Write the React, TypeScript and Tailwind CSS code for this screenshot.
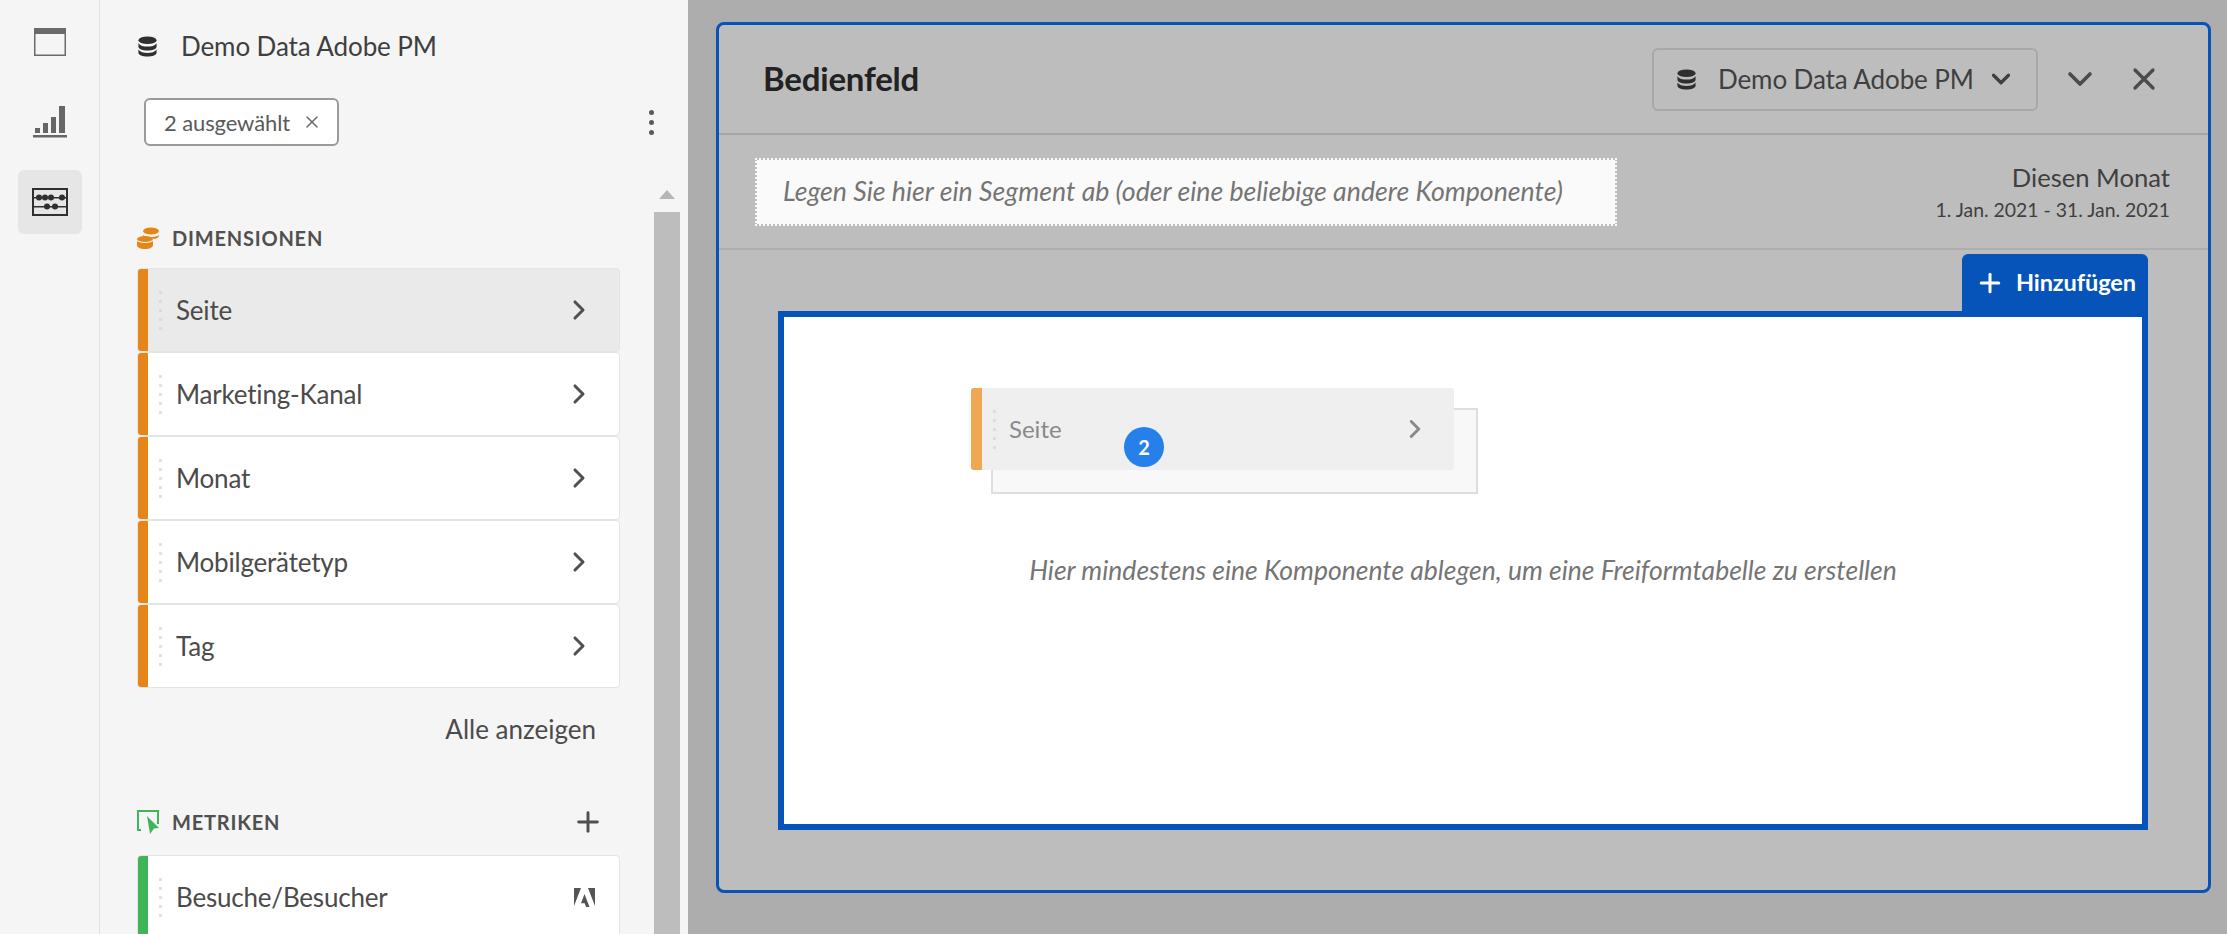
import React from 'react';
import { ChevronDown, ChevronRight, Plus, X } from 'lucide-react';

const font = 'font-["Lato","Open_Sans",sans-serif]';

function DbIcon({ className }: { className?: string }) {
  return (
    <svg viewBox="0 0 22 22" className={className} fill="currentColor">
      <ellipse cx="11" cy="4.5" rx="9.5" ry="4" />
      <path d="M1.5 7.5c1.5 2.6 5.4 3.6 9.5 3.6s8-1 9.500-3.600v3.800c0 2.300-4.300 4-9.500 4s-9.500-1.700-9.500-4z" />
      <path d="M1.500 14.200c1.500 2.600 5.400 3.600 9.500 3.600s8-1 9.500-3.600v3.400c0 2.300-4.300 4-9.500 4s-9.500-1.700-9.500-4z" />
    </svg>
  );
}

function Handle() {
  return (
    <div className="flex w-[3px] shrink-0 flex-col gap-[6px] opacity-70">
      {[0, 1, 2, 3, 4].map((i) => (
        <span key={i} className="h-[3px] w-[3px] bg-[#d6d6d6]" />
      ))}
    </div>
  );
}

function AdobeMark() {
  return (
    <svg viewBox="0 0 21 19" className="h-[19px] w-[21px] text-[#555555]" fill="currentColor">
      <path d="M0 0h7L0 18z" />
      <path d="M21 0h-7l7 18z" />
      <path d="M10.500 6l5 13h-3.400l-1.400-3.700H7z" />
    </svg>
  );
}

function Row({ label, color, active, logo }: { label: string; color: string; active?: boolean; logo?: boolean }) {
  return (
    <div className={`flex h-[84px] shrink-0 overflow-hidden rounded-[4px] border border-[#e4e4e4] ${active ? 'bg-[#eaeaea]' : 'bg-white'}`}>
      <div className={`w-[10px] shrink-0 ${color}`} />
      <div className="flex flex-1 items-center pl-[11px] pr-[24px]">
        <Handle />
        <span className="ml-[14px] flex-1 text-[26px] tracking-[-0.2px] text-[#4b4b4b]">{label}</span>
        {logo ? <AdobeMark /> : <ChevronRight size={32} strokeWidth={2.300} className="text-[#505050]" />}
      </div>
    </div>
  );
}

function Rail() {
  return (
    <div className="flex w-[100px] shrink-0 flex-col items-center border-r border-[#e1e1e1] bg-[#f5f5f5] pt-[28px]">
      <svg viewBox="0 0 32 28" className="h-[28px] w-[32px]">
        <rect x="0.750" y="0.750" width="30.500" height="26.500" fill="none" stroke="#6a6a6a" strokeWidth="1.500" />
        <rect x="0" y="0" width="32" height="6" fill="#6a6a6a" />
      </svg>
      <svg viewBox="0 0 34 32" className="mt-[50px] h-[32px] w-[34px]" fill="#666666">
        <rect x="2" y="22" width="5" height="5" />
        <rect x="10" y="17" width="5" height="10" />
        <rect x="18" y="11" width="5" height="16" />
        <rect x="26" y="0" width="6" height="27" />
        <rect x="0" y="29" width="34" height="2.500" />
      </svg>
      <div className="mt-[32px] flex h-[64px] w-[64px] items-center justify-center rounded-[6px] bg-[#e6e6e6]">
        <svg viewBox="0 0 36 28" className="h-[28px] w-[36px]" fill="#2f2f2f">
          <rect x="1" y="1" width="34" height="26" fill="none" stroke="#2f2f2f" strokeWidth="2" />
          <rect x="1" y="9" width="34" height="1.500" />
          <rect x="1" y="18" width="34" height="1.500" />
          <circle cx="7" cy="9.500" r="3" />
          <circle cx="13" cy="9.500" r="3" />
          <circle cx="19" cy="9.500" r="3" />
          <circle cx="30" cy="9.500" r="3" />
          <circle cx="15" cy="18.500" r="3" />
          <circle cx="23" cy="18.500" r="3" />
        </svg>
      </div>
    </div>
  );
}

function Sidebar() {
  return (
    <div className="flex w-[588px] shrink-0 flex-col bg-[#f5f5f5]">
      <div className="h-[178px] shrink-0 pl-[37px] pt-[32px]">
        <div className="flex h-[28px] items-center">
          <DbIcon className="h-[21px] w-[21px] text-[#2f2f2f]" />
          <span className="ml-[23px] text-[26px] tracking-[-0.1px] text-[#3f3f3f]">Demo Data Adobe PM</span>
        </div>
        <div className="mt-[38px] flex items-center pr-[34px]">
          <div className="ml-[7px] flex h-[48px] w-[195px] items-center rounded-[6px] border-2 border-[#9a9a9a] bg-white pl-[18px]">
            <span className="text-[22px] tracking-[-0.1px] text-[#5a5a5a]">2 ausgewählt</span>
            <X size={20} strokeWidth={1.800} className="ml-[12px] text-[#6a6a6a]" />
          </div>
          <div className="ml-auto flex flex-col gap-[5px]">
            <span className="h-[5px] w-[5px] rounded-full bg-[#5a5a5a]" />
            <span className="h-[5px] w-[5px] rounded-full bg-[#5a5a5a]" />
            <span className="h-[5px] w-[5px] rounded-full bg-[#5a5a5a]" />
          </div>
        </div>
      </div>
      <div className="flex min-h-0 flex-1">
        <div className="flex w-[554px] shrink-0 flex-col overflow-hidden pl-[37px] pr-[34px] pt-[46px]">
          <div className="flex h-[28px] shrink-0 items-center">
            <svg viewBox="0 0 22 22" className="h-[22px] w-[22px]" fill="#e68619">
              <ellipse cx="14" cy="4" rx="8" ry="3.500" />
              <path d="M6 8c2 1.500 5 2 8 2s6-.5 8-2c0 2.500-1.500 3.500-5 4-3-2-8-2.500-11-1.500z" />
              <ellipse cx="8" cy="12" rx="8" ry="3" />
              <path d="M0 14c2 1.500 5 2 8 2s6-.5 8-2v4c0 2.500-3.500 4-8 4s-8-1.500-8-4z" />
            </svg>
            <span className="ml-[13px] text-[20px] font-bold tracking-[0.8px] text-[#505050]">DIMENSIONEN</span>
          </div>
          <div className="mt-[16px] flex shrink-0 flex-col">
            <Row label="Seite" color="bg-[#e68619]" active />
            <Row label="Marketing-Kanal" color="bg-[#e68619]" />
            <Row label="Monat" color="bg-[#e68619]" />
            <Row label="Mobilgerätetyp" color="bg-[#e68619]" />
            <Row label="Tag" color="bg-[#e68619]" />
          </div>
          <div className="mt-[26px] shrink-0 pr-[24px] text-right text-[26px] leading-[30px] text-[#4b4b4b]">Alle anzeigen</div>
          <div className="mt-[64px] flex h-[28px] shrink-0 items-center">
            <svg viewBox="0 0 22 24" className="h-[24px] w-[22px]" fill="none">
              <path d="M4 20H1V1h20v13" stroke="#3fb55a" strokeWidth="2" />
              <path d="M10 6l12 12-5 .5L13 24z" fill="#3fb55a" />
            </svg>
            <span className="ml-[13px] text-[20px] font-bold tracking-[0.8px] text-[#505050]">METRIKEN</span>
            <Plus size={32} strokeWidth={2.200} className="ml-auto mr-[16px] text-[#505050]" />
          </div>
          <div className="mt-[19px] flex shrink-0 flex-col">
            <Row label="Besuche/Besucher" color="bg-[#3fb55a]" logo />
          </div>
        </div>
        <div className="flex w-[26px] shrink-0 flex-col">
          <div className="flex h-[34px] items-center justify-center pb-[2px]">
            <span className="h-0 w-0 border-x-[8px] border-b-[9px] border-x-transparent border-b-[#b5b5b5]" />
          </div>
          <div className="flex-1 bg-[#bdbdbd]" />
        </div>
        <div className="w-[8px] shrink-0 bg-[#f5f5f5]" />
      </div>
    </div>
  );
}

function Workspace() {
  return (
    <div className="min-w-0 flex-1 bg-[#adadad] pb-[41px] pl-[28px] pr-[16px] pt-[22px]">
      <div className="flex h-full flex-col overflow-hidden rounded-[8px] border-[3px] border-[#0654ba] bg-[#bdbdbd]">
        <div className="flex h-[110px] shrink-0 items-center border-b-2 border-[#a6a6a6] pl-[44px]">
          <span className="text-[33px] font-bold tracking-[-0.2px] text-[#222222]">Bedienfeld</span>
          <div className="ml-auto flex h-[63px] w-[386px] items-center rounded-[6px] border-2 border-[#a8a8a8] pl-[22px]">
            <DbIcon className="h-[21px] w-[21px] text-[#2f2f2f]" />
            <span className="ml-[21px] text-[26px] tracking-[-0.1px] text-[#3f3f3f]">Demo Data Adobe PM</span>
            <ChevronDown size={30} strokeWidth={2.600} className="ml-[12px] text-[#3f3f3f]" />
          </div>
          <ChevronDown size={40} strokeWidth={2.200} className="ml-[22px] text-[#4b4b4b]" />
          <X size={36} strokeWidth={2.200} className="ml-[26px] mr-[46px] text-[#4b4b4b]" />
        </div>
        <div className="flex h-[115px] shrink-0 items-center border-b-2 border-[#aeaeae] pl-[36px] pr-[38px]">
          <div className="flex h-[68px] w-[862px] items-center border-2 border-dotted border-[#fafafa] bg-[#fafafa] bg-clip-padding pl-[26px]">
            <span className="whitespace-nowrap text-[26.700px] italic text-[#757575]">Legen Sie hier ein Segment ab (oder eine beliebige andere Komponente)</span>
          </div>
          <div className="ml-auto flex flex-col items-end">
            <span className="text-[25.600px] leading-[30px] text-[#3f3f3f]">Diesen Monat</span>
            <span className="mt-[6px] text-[19.400px] leading-[24px] text-[#3f3f3f]">1. Jan. 2021 - 31. Jan. 2021</span>
          </div>
        </div>
        <div className="flex min-h-0 flex-1 flex-col items-end pl-[59px] pr-[60px] pt-[4px]">
          <div className="flex h-[57px] w-[186px] shrink-0 items-center rounded-t-[6px] bg-[#0654ba] pl-[13px] text-white">
            <Plus size={30} strokeWidth={2.400} />
            <span className="ml-[11px] text-[23.500px] font-bold tracking-[-0.1px]">Hinzufügen</span>
          </div>
          <div className="h-[519px] w-full shrink-0 border-[6px] border-[#0654ba] bg-white">
            <div className="relative ml-[187px] mt-[71px] h-[106px] w-[507px]">
              <div className="absolute left-[20px] top-[20px] h-[86px] w-[487px] border-2 border-[#dedede] bg-[#f8f8f8]" />
              <div className="relative flex h-[82px] w-[483px] overflow-hidden rounded-[3px] bg-[#efefef]">
                <div className="w-[11px] shrink-0 bg-[#efa754]" />
                <div className="flex flex-1 items-center pl-[11px] pr-[24px]">
                  <Handle />
                  <span className="ml-[13px] flex-1 text-[24px] text-[#8a8a8a]">Seite</span>
                  <ChevronRight size={30} strokeWidth={2.400} className="text-[#8a8a8a]" />
                </div>
              </div>
              <div className="absolute left-[153px] top-[39px] flex h-[40px] w-[40px] items-center justify-center rounded-full bg-[#2680eb] text-[20px] font-bold text-white">2</div>
            </div>
            <div className="mt-[61px] whitespace-nowrap text-center text-[26.500px] italic leading-[30px] text-[#757575]">
              Hier mindestens eine Komponente ablegen, um eine Freiformtabelle zu erstellen
            </div>
          </div>
        </div>
      </div>
    </div>
  );
}

export default function App() {
  return (
    <div className={`flex h-[934px] w-[2227px] overflow-hidden ${font}`}>
      <Rail />
      <Sidebar />
      <Workspace />
    </div>
  );
}
